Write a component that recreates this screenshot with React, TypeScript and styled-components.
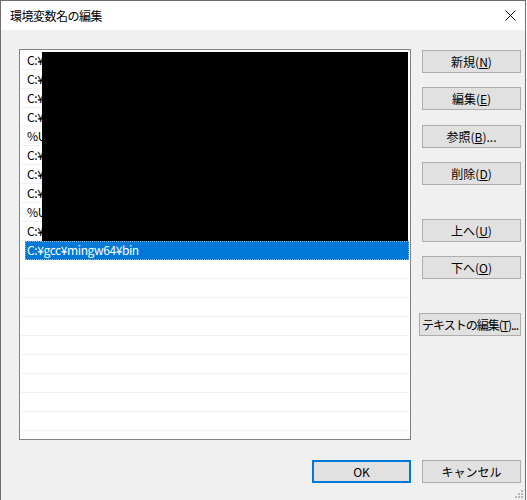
import React from 'react';
import styled, { createGlobalStyle } from 'styled-components';

const GlobalStyle = createGlobalStyle`
  html, body {
    margin: 0;
    padding: 0;
    background: #ffffff;
  }
  * {
    box-sizing: border-box;
  }
`;

const Window = styled.div`
  width: 526px;
  height: 500px;
  border: 1px solid #6e6e6e;
  border-bottom: none;
  background: #f0f0f0;
  display: flex;
  flex-direction: column;
  font-family: "Noto Sans CJK JP", "Noto Sans", sans-serif;
  font-size: 12px;
  color: #000;
  position: relative;
`;

const TitleBar = styled.div`
  height: 29px;
  background: #fff;
  display: flex;
  align-items: center;
  justify-content: space-between;
  padding: 0 9px 0 9px;
  flex-shrink: 0;
`;

const Title = styled.span`
  font-size: 12px;
  letter-spacing: -0.5px;
  color: #000;
`;

const CloseIcon = styled.svg`
  width: 11px;
  height: 11px;
`;

const Body = styled.div`
  flex: 1;
  display: flex;
  flex-direction: column;
  padding: 19px 4px 0 18px;
`;

const MainRow = styled.div`
  display: flex;
  gap: 11px;
`;

const List = styled.div`
  position: relative;
  width: 392px;
  height: 391px;
  background: #fff;
  border: 1px solid #828282;
  padding: 1px 1px 0 1px;
  overflow: hidden;
`;

const Row = styled.div<{ $selected?: boolean }>`
  height: 19px;
  line-height: 18px;
  letter-spacing: -0.4px;
  border-bottom: 1px solid ${p => (p.$selected ? 'transparent' : '#f0f0f0')};
  margin-left: ${p => (p.$selected ? '4px' : '0')};
  background: ${p => (p.$selected ? '#0078d7' : 'transparent')};
  color: ${p => (p.$selected ? '#fff' : '#000')};
  outline: ${p => (p.$selected ? '1px dotted #7fb8ea' : 'none')};
  outline-offset: -1px;
  padding-left: ${p => (p.$selected ? '2px' : '6px')};
  white-space: nowrap;
`;

const Redaction = styled.div`
  position: absolute;
  left: 22px;
  top: 2px;
  width: 366px;
  height: 189px;
  background: #000;
`;

const Side = styled.div`
  display: flex;
  flex-direction: column;
  padding-top: 1px;
`;

const Button = styled.button<{ $gap?: number; $wide?: boolean; $default?: boolean }>`
  width: ${p => (p.$wide ? '102px' : '99px')};
  height: 23px;
  margin-top: ${p => p.$gap ?? 0}px;
  margin-left: ${p => (p.$wide ? '-3px' : '0')};
  background: #e1e1e1;
  border: ${p => (p.$default ? '2px solid #0078d7' : '1px solid #adadad')};
  font-family: "Noto Sans CJK JP", "Noto Sans", sans-serif;
  font-size: 12px;
  letter-spacing: ${p => (p.$wide ? '-1px' : '0')};
  color: #000;
  padding: 0;
  display: flex;
  align-items: center;
  justify-content: center;
  white-space: nowrap;
`;

const Footer = styled.div`
  display: flex;
  justify-content: flex-end;
  gap: 11px;
  margin-top: 20px;
  padding-left: 293px;
`;

const Grip = styled.svg`
  position: absolute;
  right: 2px;
  bottom: 2px;
  width: 8px;
  height: 8px;
`;

const paths = ['C:¥', 'C:¥', 'C:¥', 'C:¥', '%U', 'C:¥', 'C:¥', 'C:¥', '%U', 'C:¥'];

const Label: React.FC<{ text: string; mnemonic: string; suffix?: string }> = ({ text, mnemonic, suffix }) => (
  <span>
    {text}(<u>{mnemonic}</u>){suffix}
  </span>
);

const App: React.FC = () => {
  return (
    <>
      <GlobalStyle />
      <Window>
        <TitleBar>
          <Title>環境変数名の編集</Title>
          <CloseIcon viewBox="0 0 11 11">
            <path d="M0.5 0.5 L10.5 10.5 M10.5 0.5 L0.5 10.5" stroke="#000" strokeWidth="1" fill="none" />
          </CloseIcon>
        </TitleBar>
        <Body>
          <MainRow>
            <List>
              {paths.map((p, i) => (
                <Row key={i}>{p}</Row>
              ))}
              <Row $selected>C:¥gcc¥mingw64¥bin</Row>
              {Array.from({ length: 9 }).map((_, i) => (
                <Row key={`e${i}`} />
              ))}
              <Redaction />
            </List>
            <Side>
              <Button><Label text="新規" mnemonic="N" /></Button>
              <Button $gap={14}><Label text="編集" mnemonic="E" /></Button>
              <Button $gap={15}><Label text="参照" mnemonic="B" suffix="..." /></Button>
              <Button $gap={14}><Label text="削除" mnemonic="D" /></Button>
              <Button $gap={34}><Label text="上へ" mnemonic="U" /></Button>
              <Button $gap={14}><Label text="下へ" mnemonic="O" /></Button>
              <Button $gap={34} $wide><Label text="テキストの編集" mnemonic="T" suffix="..." /></Button>
            </Side>
          </MainRow>
          <Footer>
            <Button $default>OK</Button>
            <Button>キャンセル</Button>
          </Footer>
        </Body>
        <Grip viewBox="0 0 8 8">
          {[[6, 0], [6, 3], [3, 3], [6, 6], [3, 6], [0, 6]].map(([x, y], i) => (
            <rect key={i} x={x} y={y} width="2" height="2" fill="#b8b8b8" />
          ))}
        </Grip>
      </Window>
    </>
  );
};

export default App;
